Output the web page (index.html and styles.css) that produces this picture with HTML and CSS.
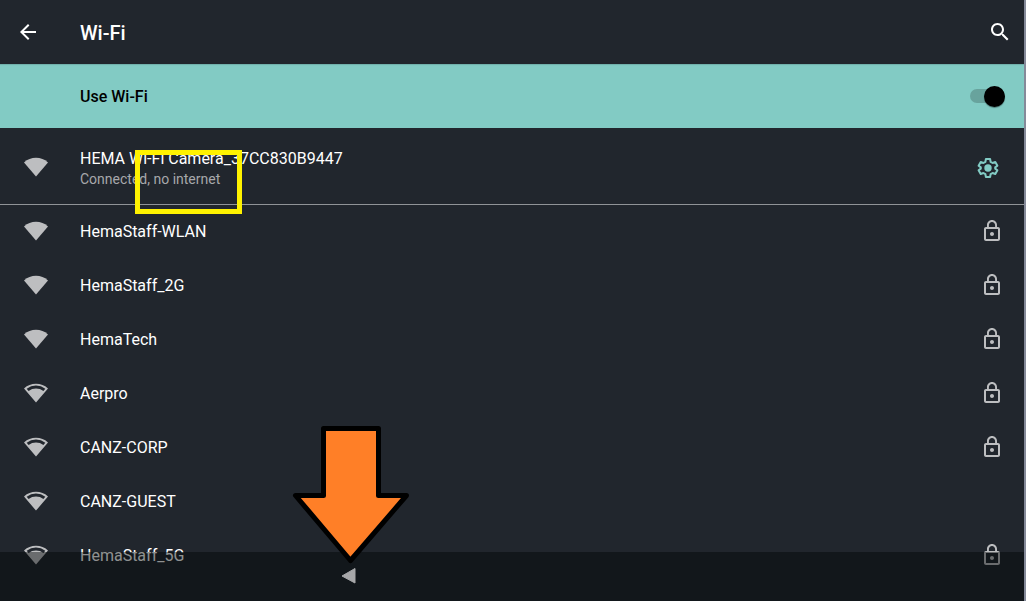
FILE: index.html
```html
<!DOCTYPE html>
<html lang="en">
<head>
<meta charset="utf-8">
<meta name="viewport" content="width=device-width, initial-scale=1">
<title>Wi-Fi</title>
<link rel="stylesheet" href="styles.css">
</head>
<body>
<svg class="symbols" aria-hidden="true">
  <symbol id="wifi-full" viewBox="0 0 24 24"><path d="M0 7.4A18 18 0 0 1 24 7.4L12 21.6z"/></symbol>
  <symbol id="wifi-mid" viewBox="0 0 24 24"><path fill-rule="evenodd" d="M0 7.400A18 18 0 0 1 24 7.400L12 21.600zM2.700 7.700L4.600 10A12.500 12.500 0 0 1 19.400 10L21.300 7.700A15.200 15.200 0 0 0 2.700 7.700z"/></symbol>
  <symbol id="lock" viewBox="0 0 24 24"><path d="M12 17c1.1 0 2-.9 2-2s-.9-2-2-2-2 .9-2 2 .9 2 2 2zm6-9h-1V6c0-2.76-2.24-5-5-5S7 3.240 7 6v2H6c-1.100 0-2 .9-2 2v10c0 1.100.9 2 2 2h12c1.100 0 2-.9 2-2V10c0-1.100-.9-2-2-2zM8.900 6c0-1.710 1.390-3.100 3.100-3.100s3.100 1.390 3.100 3.100v2H8.900V6zM18 20H6V10h12v10z"/></symbol>
</svg>
<div class="screen">
  <header class="app-bar">
    <button class="icon-button" aria-label="Back"><svg class="icon" viewBox="0 0 24 24"><path d="M20 11H7.830l5.590-5.590L12 4l-8 8 8 8 1.410-1.410L7.830 13H20v-2z"/></svg></button>
    <h1 class="title">Wi-Fi</h1>
    <button class="icon-button search" aria-label="Search"><svg class="icon" viewBox="0 0 24 24"><path d="M15.500 14h-.79l-.28-.27C15.410 12.590 16 11.110 16 9.500 16 5.910 13.090 3 9.500 3S3 5.910 3 9.500 5.910 16 9.500 16c1.610 0 3.090-.59 4.230-1.570l.27.28v.79l5 4.990L20.490 19l-4.990-5zm-6 0C7.010 14 5 11.990 5 9.500S7.010 5 9.500 5 14 7.010 14 9.500 11.990 14 9.500 14z"/></svg></button>
  </header>
  <label class="wifi-toggle" for="use-wifi">
    <span class="toggle-label">Use Wi-Fi</span>
    <input class="switch" type="checkbox" role="switch" id="use-wifi" checked>
  </label>
  <main>
    <section class="connected">
      <svg class="icon signal"><use href="#wifi-full"/></svg>
      <div class="details">
        <div class="name">HEMA Wi-Fi Camera_37CC830B9447</div>
        <div class="status">Connected, no internet</div>
      </div>
      <button class="icon-button settings" aria-label="Network settings"><svg class="icon" viewBox="0 0 24 24"><path fill="none" stroke="currentColor" stroke-width="2" stroke-linejoin="round" d="M9.900 3h4.200l.5 2.800 2 1.200 2.700-1 2.100 3.700-2.200 1.700v1.200l2.200 1.700-2.100 3.700-2.700-1-2 1.200-.5 2.800H9.900l-.5-2.800-2-1.200-2.700 1-2.100-3.700 2.200-1.700v-1.200L2.600 9.700 4.700 6l2.700 1 2-1.200z"/><circle cx="12" cy="12" r="3.700"/></svg></button>
      <div class="highlight"></div>
    </section>
    <ul class="networks">
      <li class="network"><svg class="icon signal"><use href="#wifi-full"/></svg><span class="name">HemaStaff-WLAN</span><svg class="icon lock"><use href="#lock"/></svg></li>
      <li class="network"><svg class="icon signal"><use href="#wifi-full"/></svg><span class="name">HemaStaff_2G</span><svg class="icon lock"><use href="#lock"/></svg></li>
      <li class="network"><svg class="icon signal"><use href="#wifi-full"/></svg><span class="name">HemaTech</span><svg class="icon lock"><use href="#lock"/></svg></li>
      <li class="network"><svg class="icon signal"><use href="#wifi-mid"/></svg><span class="name">Aerpro</span><svg class="icon lock"><use href="#lock"/></svg></li>
      <li class="network"><svg class="icon signal"><use href="#wifi-mid"/></svg><span class="name">CANZ-CORP</span><svg class="icon lock"><use href="#lock"/></svg></li>
      <li class="network"><svg class="icon signal"><use href="#wifi-mid"/></svg><span class="name">CANZ-GUEST</span></li>
      <li class="network"><svg class="icon signal"><use href="#wifi-mid"/></svg><span class="name">HemaStaff_5G</span><svg class="icon lock"><use href="#lock"/></svg></li>
    </ul>
  </main>
  <nav class="system-bar">
    <button class="nav-back" aria-label="System back"><svg class="nav-icon" viewBox="0 0 16 18"><path d="M14 1.500v14.500L1 9z" stroke="currentColor" stroke-linejoin="round"/></svg></button>
  </nav>
  <svg class="arrow" viewBox="0 0 118 140" aria-hidden="true"><path d="M32.500 4.500h55v67h28L59.500 136.500 4.500 71.500h28z"/></svg>
</div>
</body>
</html>
```
FILE: styles.css
```css
* { box-sizing: border-box; }

body {
  margin: 0;
  background: #21262d;
  color: #fff;
  font: 16px/22px Roboto, "Noto Sans", sans-serif;
}

.symbols { position: absolute; width: 0; height: 0; }

.screen {
  position: relative;
  height: 100vh;
  overflow: hidden;
  border-right: 2px solid #858a99;
}

.icon {
  display: block;
  flex: none;
  width: 24px;
  height: 24px;
  fill: currentColor;
}

.icon-button {
  padding: 0;
  border: 0;
  background: none;
  color: inherit;
}

.app-bar {
  display: flex;
  align-items: center;
  height: 64px;
  padding: 0 12px 0 16px;
}

.title {
  flex: 1;
  margin: 0 0 0 40px;
  padding-top: 2px;
  font-size: 20px;
  font-weight: 500;
  line-height: 24px;
}

.wifi-toggle {
  display: flex;
  align-items: center;
  justify-content: space-between;
  height: 64px;
  padding: 0 19px 0 80px;
  background: #82cbc4;
  box-shadow: inset 0 2px 1px -1px #6fafaa;
  color: #000;
}

.toggle-label {
  padding-top: 2px;
  font-weight: 500;
}

.switch {
  position: relative;
  appearance: none;
  width: 35px;
  height: 14px;
  margin: 0;
  border-radius: 7px;
  background: #68a39d;
}

.switch::after {
  content: "";
  position: absolute;
  top: -3px;
  right: 0;
  width: 21px;
  height: 21px;
  border-radius: 50%;
  background: #000;
  box-shadow: 0 1px 1px rgba(0, 0, 0, 0.4);
}

.connected {
  position: relative;
  display: flex;
  align-items: center;
  padding: 19px 24px 15px 0;
}

.signal {
  margin: 0 32px 0 24px;
  color: #bdbec0;
}

.connected .signal { margin-bottom: 2px; }

.details {
  flex: 1;
  padding-top: 1px;
}

.status {
  color: #a7a8ab;
  font-size: 14px;
  line-height: 19px;
}

.settings { color: #82cbc4; }

.highlight {
  position: absolute;
  top: 22px;
  left: 135px;
  width: 107px;
  height: 64px;
  border: 5px solid #fff200;
}

.networks {
  margin: 0;
  padding: 0;
  list-style: none;
  box-shadow: inset 0 1px #909397;
}

.network {
  display: flex;
  align-items: center;
  height: 54px;
  padding-right: 20px;
}

.network .name {
  flex: 1;
  padding-top: 2px;
}

.lock { color: #bdbec0; }

.system-bar {
  position: absolute;
  inset: auto 0 0;
  height: 49px;
  padding: 15px 341px;
  background: rgba(0, 4, 4, 0.44);
}

.nav-back {
  display: block;
  padding: 0;
  border: 0;
  background: none;
  color: #a7a8aa;
}

.nav-icon {
  display: block;
  width: 16px;
  height: 18px;
  fill: currentColor;
}

.arrow {
  position: absolute;
  top: 424px;
  left: 291px;
  width: 118px;
  height: 140px;
  fill: #ff7f27;
  stroke: #000;
  stroke-width: 5px;
  stroke-linejoin: round;
}
```
